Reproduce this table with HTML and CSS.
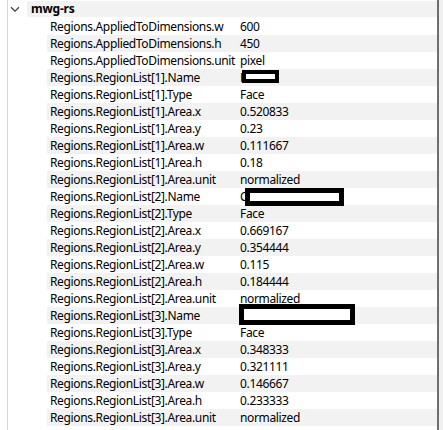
FILE: index.html
```html
<!DOCTYPE html>
<html>
<head>
<meta charset="utf-8">
<link rel="stylesheet" href="styles.css">
</head>
<body>
<div class="pane">
  <div class="group">
    <div class="toggle">
      <svg width="10" height="7" viewBox="0 0 10 7"><polyline points="1,1.2 5,5.2 9,1.2" fill="none" stroke="#404040" stroke-width="1.3"/></svg>
    </div>
    <div class="group-label">mwg-rs</div>
  </div>
  <div class="rows">
    <div class="row"><span class="k">Regions.AppliedToDimensions.w</span><span class="v">600</span></div>
    <div class="row"><span class="k">Regions.AppliedToDimensions.h</span><span class="v">450</span></div>
    <div class="row"><span class="k">Regions.AppliedToDimensions.unit</span><span class="v">pixel</span></div>
    <div class="row"><span class="k">Regions.RegionList[1].Name</span><span class="v">F<i class="redact r1"></i></span></div>
    <div class="row"><span class="k">Regions.RegionList[1].Type</span><span class="v">Face</span></div>
    <div class="row"><span class="k">Regions.RegionList[1].Area.x</span><span class="v">0.520833</span></div>
    <div class="row"><span class="k">Regions.RegionList[1].Area.y</span><span class="v">0.23</span></div>
    <div class="row"><span class="k">Regions.RegionList[1].Area.w</span><span class="v">0.111667</span></div>
    <div class="row"><span class="k">Regions.RegionList[1].Area.h</span><span class="v">0.18</span></div>
    <div class="row"><span class="k">Regions.RegionList[1].Area.unit</span><span class="v">normalized</span></div>
    <div class="row"><span class="k">Regions.RegionList[2].Name</span><span class="v">C<i class="redact r2"></i></span></div>
    <div class="row"><span class="k">Regions.RegionList[2].Type</span><span class="v">Face</span></div>
    <div class="row"><span class="k">Regions.RegionList[2].Area.x</span><span class="v">0.669167</span></div>
    <div class="row"><span class="k">Regions.RegionList[2].Area.y</span><span class="v">0.354444</span></div>
    <div class="row"><span class="k">Regions.RegionList[2].Area.w</span><span class="v">0.115</span></div>
    <div class="row"><span class="k">Regions.RegionList[2].Area.h</span><span class="v">0.184444</span></div>
    <div class="row"><span class="k">Regions.RegionList[2].Area.unit</span><span class="v">normalized</span></div>
    <div class="row"><span class="k">Regions.RegionList[3].Name</span><span class="v"><i class="redact r3"></i></span></div>
    <div class="row"><span class="k">Regions.RegionList[3].Type</span><span class="v">Face</span></div>
    <div class="row"><span class="k">Regions.RegionList[3].Area.x</span><span class="v">0.348333</span></div>
    <div class="row"><span class="k">Regions.RegionList[3].Area.y</span><span class="v">0.321111</span></div>
    <div class="row"><span class="k">Regions.RegionList[3].Area.w</span><span class="v">0.146667</span></div>
    <div class="row"><span class="k">Regions.RegionList[3].Area.h</span><span class="v">0.233333</span></div>
    <div class="row"><span class="k">Regions.RegionList[3].Area.unit</span><span class="v">normalized</span></div>
  </div>
</div>
<div class="vline"></div>
<div class="strip"></div>
</body>
</html>
```
FILE: styles.css
```css
html, body {
  margin: 0;
  padding: 0;
  background: #ffffff;
}
body {
  display: flex;
  height: 430px;
  overflow: hidden;
  font-family: "Noto Sans", "Open Sans", sans-serif;
  font-size: 12px;
  letter-spacing: -0.35px;
  color: #000000;
}
.pane {
  margin-left: 7px;
  border-left: 1px solid #d7d7d7;
  width: 429px;
  padding-top: 1px;
  box-sizing: content-box;
}
.group {
  display: flex;
  height: 16px;
  margin-bottom: 1px;
}
.toggle {
  width: 19px;
  display: flex;
  align-items: flex-start;
  padding-top: 5px;
  box-sizing: border-box;
  padding-left: 2px;
}
.group-label {
  flex: 1;
  background: #f2f2f2;
  font-weight: bold;
  letter-spacing: -0.2px;
  padding-left: 4px;
  line-height: 16px;
}
.rows {
  margin-left: 39px;
}
.row {
  display: grid;
  grid-template-columns: 193px 1fr;
  height: 17px;
  line-height: 17px;
  white-space: nowrap;
}
.row:nth-child(odd) {
  background: #ffffff;
}
.row:nth-child(even) {
  background: #f2f2f2;
}
.k {
  padding-left: 3px;
  overflow: hidden;
}
.v {
  position: relative;
}
.redact {
  position: absolute;
  box-sizing: border-box;
  background: #ffffff;
  border: 4px solid #000000;
}
.r1 {
  left: 2px;
  top: 1px;
  width: 37px;
  height: 13px;
}
.r2 {
  left: 5px;
  top: 0;
  width: 99px;
  height: 18px;
  border-width: 5px;
}
.r3 {
  left: -1px;
  top: -3px;
  width: 116px;
  height: 21px;
  border-width: 5px;
}
.vline {
  width: 2px;
  background: #6e6e6e;
}
.strip {
  flex: 1;
  background: #f0f0f0;
}
```
